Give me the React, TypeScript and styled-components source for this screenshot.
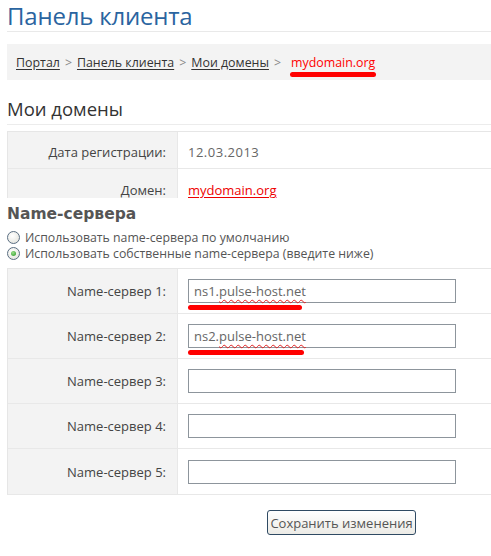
import React from "react";
import styled, { createGlobalStyle } from "styled-components";

const Global = createGlobalStyle`
  html, body { margin: 0; padding: 0; background: #ffffff; }
  body { font-family: "Open Sans", "Liberation Sans", sans-serif; color: #444; }
  * { box-sizing: border-box; }
`;

const Page = styled.div`
  padding-left: 7px;
  width: 491px;
`;

const Title = styled.h1`
  margin: 0;
  font-family: "Open Sans", sans-serif;
  font-weight: 400;
  font-size: 24px;
  line-height: 31px;
  height: 32px;
  color: #2a64a0;
  border-bottom: 1px solid #e9e9e9;
  letter-spacing: -0.2px;
`;

const Crumbs = styled.nav`
  margin-top: 12px;
  height: 36px;
  background: #f3f3f3;
  display: flex;
  align-items: center;
  padding-left: 9px;
  font-size: 12.4px;
`;

const CrumbLink = styled.a`
  color: #333;
  text-decoration: underline;
  text-underline-offset: 2px;
`;

const Sep = styled.span`
  color: #888;
  margin: 0 5px;
`;

const Current = styled.span`
  position: relative;
  color: #ff0000;
  margin-left: 5px;
  font-size: 12.4px;
  &::after {
    content: "";
    position: absolute;
    left: -1px;
    right: -1px;
    bottom: -6px;
    height: 5px;
    border-radius: 3px;
    background: #ff0000;
  }
`;

const Heading = styled.h2`
  margin: 13px 0 0;
  font-family: "Open Sans", sans-serif;
  font-weight: 400;
  font-size: 18.5px;
  line-height: 31px;
  color: #333;
  border-bottom: 1px solid #ececec;
`;

const TableCut = styled.div`
  margin-top: 6px;
  height: 67px;
  overflow: hidden;
`;

const Table = styled.div`
  border: 1px solid #e6e6e6;
  border-right: none;
`;

const Row = styled.div<{ $h: number; $shift?: number }>`
  display: grid;
  grid-template-columns: 170px 1fr;
  height: ${(p) => p.$h}px;
  border-bottom: 1px solid #e8e8e8;
  &:last-child { border-bottom: none; }
  & > * { padding-top: ${(p) => p.$shift || 0}px; }
`;

const Label = styled.div`
  background: #f3f3f3;
  border-right: 1px solid #e8e8e8;
  display: flex;
  align-items: center;
  justify-content: flex-end;
  padding-right: 11px;
  font-size: 13px;
  color: #444;
`;

const Value = styled.div`
  display: flex;
  align-items: center;
  padding-left: 10px;
  font-size: 13px;
`;

const DateText = styled.span`
  color: #666;
  letter-spacing: 0.5px;
`;

const DomainLink = styled.a`
  color: #ee0000;
  text-decoration: underline;
  text-underline-offset: 2px;
`;

const SubHeading = styled.h3`
  margin: 6px 0 0;
  font-family: "DejaVu Sans", Verdana, sans-serif;
  font-weight: 700;
  font-size: 15.5px;
  line-height: 20px;
  color: #555;
`;

const RadioList = styled.div`
  margin-top: 5px;
  display: flex;
  flex-direction: column;
  padding-bottom: 7px;
  border-bottom: 1px solid #e6e6e6;
`;

const RadioRow = styled.label`
  display: flex;
  align-items: center;
  height: 16px;
  font-size: 12.3px;
  color: #555;
`;

const Radio = styled.input`
  appearance: none;
  margin: 0 5px 0 0;
  width: 13px;
  height: 13px;
  border-radius: 50%;
  border: 1px solid #5a6e82;
  background: radial-gradient(circle at 40% 35%, #ffffff 0%, #e6e6e0 80%);
  position: relative;
  flex: none;
  &:checked::after {
    content: "";
    position: absolute;
    left: 3px;
    top: 3px;
    width: 5px;
    height: 5px;
    border-radius: 50%;
    background: radial-gradient(circle at 40% 35%, #9be08a 0%, #2f9a2a 90%);
  }
`;

const NsTable = styled(Table)`
  border-top: none;
  border-bottom: 1px solid #e8e8e8;
`;

const Field = styled.div`
  position: relative;
  width: 268px;
  height: 24px;
`;

const TextInput = styled.input`
  width: 268px;
  height: 24px;
  border: 1px solid #8d959c;
  padding: 0 0 0 5px;
  font-family: "Open Sans", sans-serif;
  font-size: 13px;
  color: #666;
  background: #fff;
  outline: none;
`;

const Spell = styled.span`
  position: absolute;
  left: 6px;
  top: 0;
  line-height: 24px;
  font-family: "Open Sans", sans-serif;
  font-size: 13px;
  color: transparent;
  pointer-events: none;
  white-space: pre;
`;

const Wavy = styled.span`
  text-decoration: underline wavy #e02020;
  text-decoration-thickness: 1px;
  text-underline-offset: 3px;
`;

const Marker = styled.span<{ $w: number }>`
  position: absolute;
  left: 0;
  top: 26px;
  width: ${(p) => p.$w}px;
  height: 5px;
  border-radius: 3px;
  background: #ff0000;
`;

const Actions = styled.div`
  padding: 15px 0 0 260px;
`;

const SaveButton = styled.button`
  width: 149px;
  height: 25px;
  border: 1px solid #2f4a63;
  border-radius: 3px;
  background: linear-gradient(#ffffff, #ecebe6);
  font-family: "Open Sans", sans-serif;
  font-size: 13px;
  color: #555;
  padding: 0;
`;

const servers = [
  { n: 1, value: "ns1.", host: "pulse-host.net", mark: 114 },
  { n: 2, value: "ns2.", host: "pulse-host.net", mark: 116 },
  { n: 3 },
  { n: 4 },
  { n: 5 },
] as { n: number; value?: string; host?: string; mark?: number }[];

export default function App() {
  return (
    <Page>
      <Global />
      <Title>Панель клиента</Title>
      <Crumbs>
        <CrumbLink>Портал</CrumbLink>
        <Sep>&gt;</Sep>
        <CrumbLink>Панель клиента</CrumbLink>
        <Sep>&gt;</Sep>
        <CrumbLink>Мои домены</CrumbLink>
        <Sep>&gt;</Sep>
        <Current>mydomain.org</Current>
      </Crumbs>

      <Heading>Мои домены</Heading>
      <TableCut>
        <Table>
          <Row $h={37} $shift={4}>
            <Label>Дата регистрации:</Label>
            <Value>
              <DateText>12.03.2013</DateText>
            </Value>
          </Row>
          <Row $h={40} $shift={2}>
            <Label>Домен:</Label>
            <Value>
              <DomainLink>mydomain.org</DomainLink>
            </Value>
          </Row>
        </Table>
      </TableCut>

      <SubHeading>Name-сервера</SubHeading>
      <RadioList>
        <RadioRow>
          <Radio type="radio" name="ns" />
          Использовать name-сервера по умолчанию
        </RadioRow>
        <RadioRow>
          <Radio type="radio" name="ns" defaultChecked />
          Использовать собственные name-сервера (введите ниже)
        </RadioRow>
      </RadioList>

      <NsTable>
        {servers.map((s) => (
          <Row key={s.n} $h={45}>
            <Label>Name-сервер {s.n}:</Label>
            <Value>
              <Field>
                <TextInput
                  type="text"
                  defaultValue={s.value ? s.value + s.host : ""}
                  spellCheck={false}
                />
                {s.value && (
                  <Spell>
                    {s.value}
                    <Wavy>{s.host}</Wavy>
                  </Spell>
                )}
                {s.mark && <Marker $w={s.mark} />}
              </Field>
            </Value>
          </Row>
        ))}
      </NsTable>

      <Actions>
        <SaveButton type="button">Сохранить изменения</SaveButton>
      </Actions>
    </Page>
  );
}
